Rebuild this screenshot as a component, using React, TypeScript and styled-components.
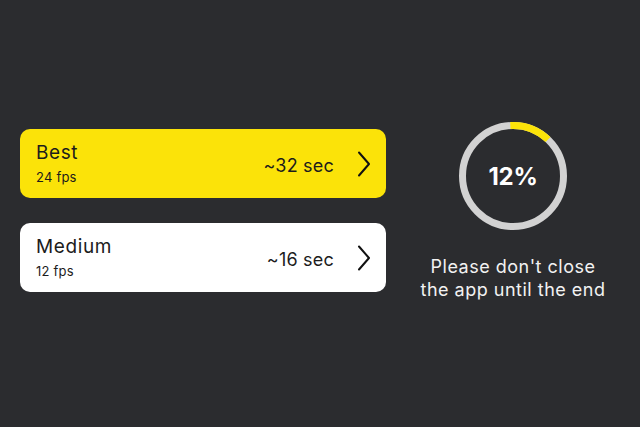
import React from "react";
import styled, { createGlobalStyle } from "styled-components";

const Global = createGlobalStyle`
  html, body { margin: 0; padding: 0; background: #2b2c2f; }
  body { font-family: "Inter", "Noto Sans", sans-serif; }
`;

const Page = styled.div`
  width: 640px;
  height: 427px;
  box-sizing: border-box;
  display: flex;
  align-items: center;
  padding: 0 0 6px 20px;
  background: #2b2c2f;
`;

const Options = styled.div`
  width: 366px;
  display: flex;
  flex-direction: column;
  gap: 25px;
`;

const Card = styled.div<{ $active?: boolean }>`
  height: 69px;
  box-sizing: border-box;
  border-radius: 10px;
  background: ${(p) => (p.$active ? "#fbe309" : "#ffffff")};
  color: #1c1c1c;
  display: flex;
  align-items: center;
  padding: 0 15px 0 16px;
`;

const Labels = styled.div`
  flex: 1;
  display: flex;
  flex-direction: column;
  gap: 5px;
  padding-bottom: 1px;
`;

const Title = styled.div`
  font-size: 19px;
  line-height: 22px;
  letter-spacing: 0.6px;
`;

const Fps = styled.div`
  font-size: 13px;
  line-height: 16px;
  letter-spacing: 0.2px;
`;

const Time = styled.div`
  font-size: 18px;
  letter-spacing: 0.2px;
  margin-right: 23px;
  padding-top: 3px;
`;

const Progress = styled.div`
  flex: 1;
  display: flex;
  flex-direction: column;
  align-items: center;
  padding-top: 2px;
`;

const Ring = styled.div`
  position: relative;
  width: 108px;
  height: 108px;
  display: flex;
  align-items: center;
  justify-content: center;
`;

const RingSvg = styled.svg`
  position: absolute;
  inset: 0;
`;

const Percent = styled.div`
  color: #ffffff;
  font-weight: 700;
  font-size: 24px;
  letter-spacing: -0.2px;
  padding-top: 1px;
`;

const Note = styled.div`
  margin-top: 25px;
  color: #f2f2f2;
  font-size: 18px;
  line-height: 23px;
  text-align: center;
  letter-spacing: 0.5px;
`;

const Chevron = () => (
  <svg width="14" height="26" viewBox="0 0 14 26" fill="none">
    <path d="M2 1.5 L12 13 L2 24.5" stroke="#111" strokeWidth="2" strokeLinecap="round" strokeLinejoin="round" />
  </svg>
);

const ProgressRing = ({ value }: { value: number }) => {
  const r = 50.5;
  const c = 2 * Math.PI * r;
  return (
    <RingSvg width="108" height="108" viewBox="0 0 108 108">
      <circle cx="54" cy="54" r={r} stroke="#d2d2d2" strokeWidth="7" fill="none" />
      <circle
        cx="54"
        cy="54"
        r={r}
        stroke="#fbe309"
        strokeWidth="7"
        fill="none"
        strokeDasharray={`${(c * value) / 100} ${c}`}
        transform="rotate(-93 54 54)"
      />
    </RingSvg>
  );
};

const options = [
  { title: "Best", fps: "24 fps", time: "~32 sec", active: true },
  { title: "Medium", fps: "12 fps", time: "~16 sec", active: false },
];

export default function App() {
  return (
    <>
      <Global />
      <Page>
        <Options>
          {options.map((o) => (
            <Card key={o.title} $active={o.active}>
              <Labels>
                <Title>{o.title}</Title>
                <Fps>{o.fps}</Fps>
              </Labels>
              <Time>{o.time}</Time>
              <Chevron />
            </Card>
          ))}
        </Options>
        <Progress>
          <Ring>
            <ProgressRing value={13} />
            <Percent>12%</Percent>
          </Ring>
          <Note>
            Please don't close
            <br />
            the app until the end
          </Note>
        </Progress>
      </Page>
    </>
  );
}
